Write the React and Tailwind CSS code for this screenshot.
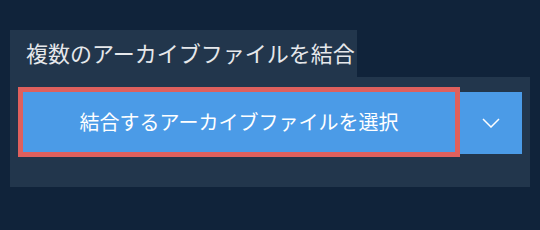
export default function App() {
  const jp = { fontFamily: '"Noto Sans CJK JP", "Noto Sans", sans-serif' }

  return (
    <div className="w-[540px] h-[230px] bg-[#10233a] pt-[30px] pl-[10px]" style={jp}>
      <div className="w-[347px] h-[47px] bg-[#22364c] pl-4 flex items-center">
        <span className="text-[22px] leading-none whitespace-nowrap text-[#e6e8eb] -mt-[3px]">複数のアーカイブファイルを結合</span>
      </div>
      <div className="w-[520px] h-[110px] bg-[#22364c] pt-[15px] pl-[13px]">
        <div className="flex items-start">
          <button className="w-[432px] h-[60px] bg-[#4b9be7] text-white text-[20px] outline-[5px] outline-solid outline-[#df605d] flex items-center justify-center">
            結合するアーカイブファイルを選択
          </button>
          <button className="ml-[5px] w-[62px] h-[62px] bg-[#4b9be7] flex items-center justify-center">
            <svg width="18" height="10" viewBox="0 0 18 10" fill="none">
              <path d="M1 1 L9 9 L17 1" stroke="white" strokeWidth="1.5" />
            </svg>
          </button>
        </div>
      </div>
    </div>
  )
}
